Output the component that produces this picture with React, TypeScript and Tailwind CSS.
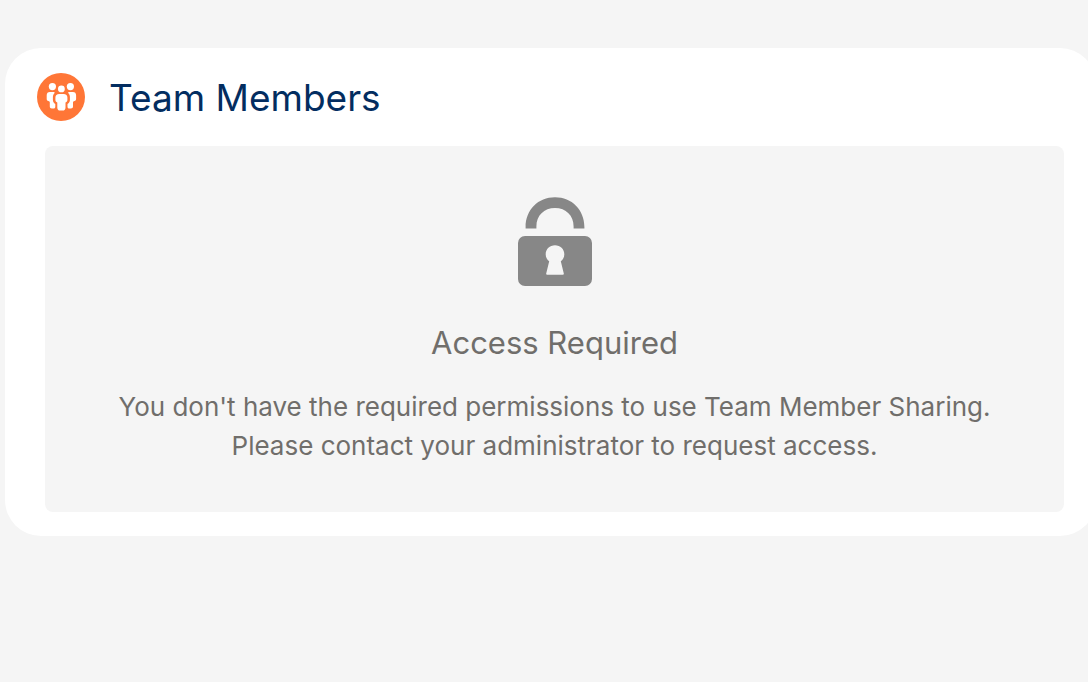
function TeamIcon() {
  return (
    <svg viewBox="0 0 48 48" className="size-12 shrink-0" aria-hidden="true">
      <circle cx="24" cy="24" r="24" fill="#ff7637" />
      <g fill="#fff">
        <circle cx="15.4" cy="13.6" r="3.6" />
        <circle cx="33.4" cy="13.6" r="3.6" />
        <circle cx="24.4" cy="15.9" r="3.4" />
        <path d="M12.9 18.9H15.8C17.6 18.9 18 19.4 17.4 20.3C16.4 21.4 15.9 22.6 15.9 24V27C15.9 28.8 16.8 30 18.3 30.9V33.5C18.3 35 17.7 35.6 16.4 35.6H14.9C13.5 35.6 12.8 34.9 12.8 33.6V29.6C12.8 28.6 12.3 28.3 11.3 28C10.2 27.6 9.7 27 9.7 25.9V22.3C9.7 20.1 10.8 18.9 12.9 18.9Z" />
        <path d="M35.9 18.9H33C31.2 18.9 30.8 19.4 31.4 20.3C32.4 21.4 32.9 22.6 32.9 24V27C32.9 28.8 32 30 30.5 30.9V33.5C30.5 35 31.1 35.6 32.4 35.6H33.9C35.3 35.6 36 34.9 36 33.6V29.6C36 28.6 36.5 28.3 37.5 28C38.6 27.6 39.1 27 39.1 25.9V22.3C39.1 20.1 38 18.9 35.9 18.9Z" />
        <path d="M22.2 21H26.6C29 21 30.4 22.3 30.4 24.6V27C30.4 28.3 29.8 29 28.5 29.6V34.5C28.5 36.6 27.5 37.6 25.7 37.6H23.1C21.3 37.6 20.3 36.6 20.3 34.5V29.6C19 29 18.4 28.3 18.4 27V24.6C18.4 22.3 19.8 21 22.2 21Z" />
      </g>
    </svg>
  );
}

function UnlockedIcon() {
  return (
    <svg viewBox="0 0 74 90" className="h-[90px] w-[74px]" fill="#878787" aria-hidden="true">
      <path d="M7.6 31.6V30.2C7.6 12.8 20.2 0.3 37 0.3S66.4 12.8 66.4 30.2V31.6H55.6V29.5C55.6 18.5 48 11 37 11S18.4 18.5 18.4 29.5V31.6Z" />
      <path
        fillRule="evenodd"
        d="M7 39H67A7 7 0 0 1 74 46V82A7 7 0 0 1 67 89H7A7 7 0 0 1 0 82V46A7 7 0 0 1 7 39ZM31.2 64.3L28.2 76.4Q27.9 77.7 29.2 77.7H44.8Q46.1 77.7 45.8 76.4L42.8 64.3C45 62.6 46.3 60.3 46.3 57.2C46.3 52 42.2 48.2 37 48.2S27.7 52 27.7 57.2C27.7 60.3 29 62.6 31.2 64.3Z"
      />
    </svg>
  );
}

function AccessRequired() {
  return (
    <section className="mt-[23px] mr-8 ml-10 flex flex-col items-center rounded-lg bg-[#f5f5f5] px-6 pt-[51px] pb-[47px] text-center text-[#706e6b]">
      <UnlockedIcon />
      <h2 className="mt-9 text-[31px] leading-10">Access Required</h2>
      <p className="mt-6 text-[26px] leading-[39px]">
        You don't have the required permissions to use Team Member Sharing.
        <br />
        Please contact your administrator to request access.
      </p>
    </section>
  );
}

export default function App() {
  return (
    <main className="min-h-screen overflow-hidden bg-[#f5f5f5] pt-12 pl-[5px] font-['Inter','Liberation_Sans',sans-serif]">
      <article className="-mr-2 rounded-[36px] bg-white pb-6">
        <header className="flex items-start gap-6 pt-[25px] pl-8">
          <TeamIcon />
          <h1 className="text-[37px] leading-[50px] text-[#032d60]">Team Members</h1>
        </header>
        <AccessRequired />
      </article>
    </main>
  );
}
